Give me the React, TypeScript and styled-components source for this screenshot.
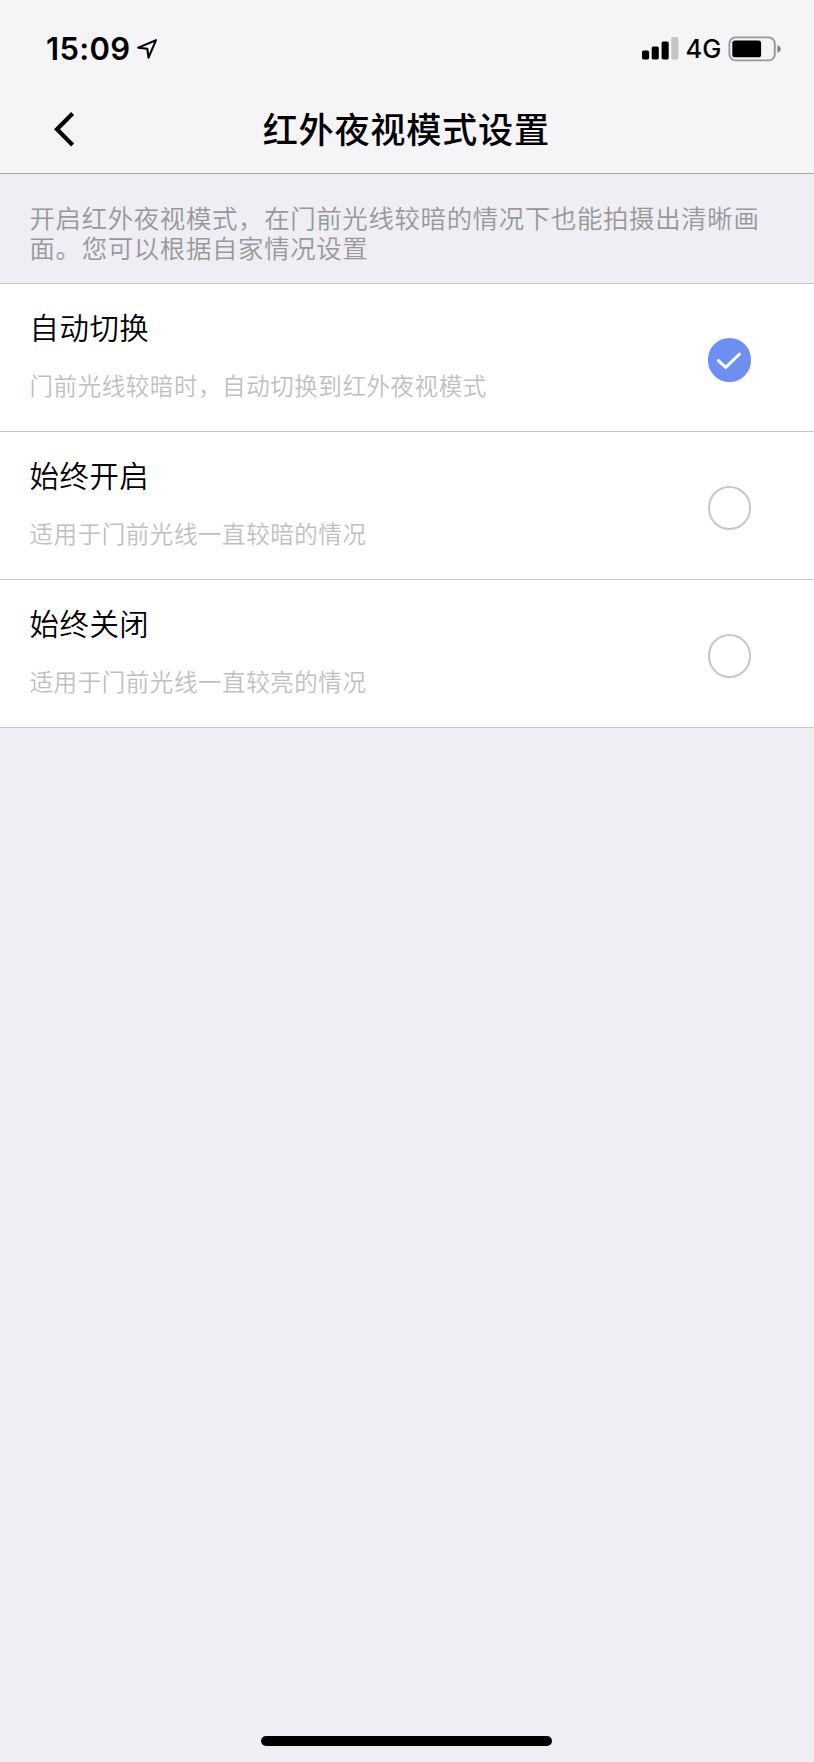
import React, { useState } from 'react';
import styled, { createGlobalStyle } from 'styled-components';

const GlobalStyle = createGlobalStyle`
  body {
    margin: 0;
    background: #efeef4;
    font-family: Inter, 'Noto Sans CJK SC', sans-serif;
  }
`;

const Screen = styled.div`
  display: flex;
  flex-direction: column;
  width: 814px;
  height: 1762px;
  overflow: hidden;
  background: #efeef4;
`;

const Header = styled.header`
  box-sizing: border-box;
  height: 174px;
  background: #f5f5f7;
  border-bottom: 1px solid #a7a7aa;
`;

const StatusBar = styled.div`
  display: flex;
  justify-content: space-between;
  align-items: center;
  height: 98px;
  padding: 0 32px 0 46px;
  box-sizing: border-box;
`;

const StatusGroup = styled.div`
  display: flex;
  align-items: center;
`;

const Time = styled.span`
  width: 90px;
  font-size: 31px;
  font-weight: 600;
  letter-spacing: 0.3px;
  line-height: 40px;
`;

const Network = styled.span`
  width: 49px;
  padding-left: 6.5px;
  box-sizing: border-box;
  font-size: 25.5px;
  font-weight: 450;
  line-height: 40px;
`;

const NavBar = styled.nav`
  display: grid;
  grid-template-columns: 120px 1fr 120px;
  align-items: center;
  height: 62px;
`;

const BackButton = styled.button`
  display: flex;
  align-items: center;
  height: 62px;
  padding: 0 0 0 52px;
  border: 0;
  background: none;
`;

const Title = styled.h1`
  margin: 0;
  padding: 0 1.5px 2px 0;
  text-align: center;
  font: 500 35.2px/50px 'Noto Sans CJK SC', sans-serif;
  letter-spacing: 0.7px;
`;

const Note = styled.p`
  box-sizing: border-box;
  height: 109px;
  margin: 0;
  padding: 27.5px 36px 0 29.5px;
  color: #98989a;
  font: 350 25.4px/30.6px 'Noto Sans CJK SC', sans-serif;
  letter-spacing: 0.68px;
`;

const OptionList = styled.div`
  display: flex;
  flex-direction: column;
  border-top: 1px solid #c8c8cc;
`;

const Option = styled.button`
  display: flex;
  align-items: center;
  justify-content: space-between;
  box-sizing: border-box;
  height: 148px;
  padding: 0 63px 0 29.5px;
  border: 0;
  border-bottom: 1px solid #c8c8cc;
  background: #fff;
  text-align: left;
`;

const OptionText = styled.span`
  display: flex;
  flex-direction: column;
  gap: 19px;
  padding-bottom: 5px;
`;

const OptionName = styled.span`
  color: #000;
  font: 350 29.4px/40px 'Noto Sans CJK SC', sans-serif;
  letter-spacing: 0.55px;
`;

const OptionHint = styled.span`
  color: #bfbfc0;
  font: 350 23.5px/40px 'Noto Sans CJK SC', sans-serif;
  letter-spacing: 0.57px;
`;

const Radio = styled.span<{ $on: boolean }>`
  display: flex;
  align-items: center;
  justify-content: center;
  box-sizing: border-box;
  width: 43.5px;
  height: 43.5px;
  margin-top: 5px;
  border: 2px solid ${(p) => (p.$on ? '#6e8ff2' : '#c8c7cc')};
  border-radius: 50%;
  background: ${(p) => (p.$on ? '#6e8ff2' : '#fff')};
`;

const HomeArea = styled.footer`
  display: flex;
  justify-content: center;
  margin-top: auto;
  padding: 0 1px 16px 0;
`;

const HomeIndicator = styled.div`
  width: 291px;
  height: 10px;
  border-radius: 5px;
  background: #000;
`;

const LocationIcon = () => (
  <svg width="22" height="22" viewBox="0 0 22 22">
    <path d="M20 2.2 2.2 9.6 11.3 10.8 12.5 19.7Z" fill="none" stroke="#000" strokeWidth="2.1" strokeLinejoin="round" />
  </svg>
);

const SignalIcon = () => (
  <svg width="37" height="24" viewBox="0 0 37 24">
    <rect x="0" y="13.4" width="7.1" height="9" rx="1.6" />
    <rect x="9.7" y="9.4" width="7.1" height="13" rx="1.6" />
    <rect x="19.6" y="4.6" width="7.1" height="17.8" rx="1.6" />
    <rect x="29.3" y="0" width="7.1" height="22.4" rx="1.6" fill="#c4c4c5" />
  </svg>
);

const BatteryIcon = () => (
  <svg width="54" height="26" viewBox="0 0 54 26">
    <rect x="1.4" y="1.4" width="45.4" height="23" rx="6.2" fill="none" stroke="#98989a" strokeWidth="1.9" />
    <rect x="4.3" y="4.5" width="28.8" height="16.8" rx="2.6" />
    <path d="M49.3 9.3q3.5 1.2 3.5 3.8t-3.5 3.8z" fill="#858587" />
  </svg>
);

const BackIcon = () => (
  <svg width="23" height="36" viewBox="0 0 23 36">
    <path d="M20.6 2.6 5 18.3 20.6 34" fill="none" stroke="#000" strokeWidth="4.2" />
  </svg>
);

const CheckIcon = () => (
  <svg width="26" height="20" viewBox="0 0 26 20">
    <path d="M2.4 10.6 9.7 17.4 23.6 4" fill="none" stroke="#fff" strokeWidth="3" strokeLinecap="round" strokeLinejoin="round" />
  </svg>
);

const options = [
  { name: '自动切换', hint: '门前光线较暗时，自动切换到红外夜视模式' },
  { name: '始终开启', hint: '适用于门前光线一直较暗的情况' },
  { name: '始终关闭', hint: '适用于门前光线一直较亮的情况' },
];

export default function App() {
  const [selected, setSelected] = useState(0);
  return (
    <Screen>
      <GlobalStyle />
      <Header>
        <StatusBar>
          <StatusGroup>
            <Time>15:09</Time>
            <LocationIcon />
          </StatusGroup>
          <StatusGroup>
            <SignalIcon />
            <Network>4G</Network>
            <BatteryIcon />
          </StatusGroup>
        </StatusBar>
        <NavBar>
          <BackButton aria-label="返回">
            <BackIcon />
          </BackButton>
          <Title>红外夜视模式设置</Title>
        </NavBar>
      </Header>
      <Note>开启红外夜视模式，在门前光线较暗的情况下也能拍摄出清晰画面。您可以根据自家情况设置</Note>
      <OptionList>
        {options.map((o, i) => (
          <Option key={o.name} onClick={() => setSelected(i)}>
            <OptionText>
              <OptionName>{o.name}</OptionName>
              <OptionHint>{o.hint}</OptionHint>
            </OptionText>
            <Radio $on={selected === i}>{selected === i && <CheckIcon />}</Radio>
          </Option>
        ))}
      </OptionList>
      <HomeArea>
        <HomeIndicator />
      </HomeArea>
    </Screen>
  );
}
